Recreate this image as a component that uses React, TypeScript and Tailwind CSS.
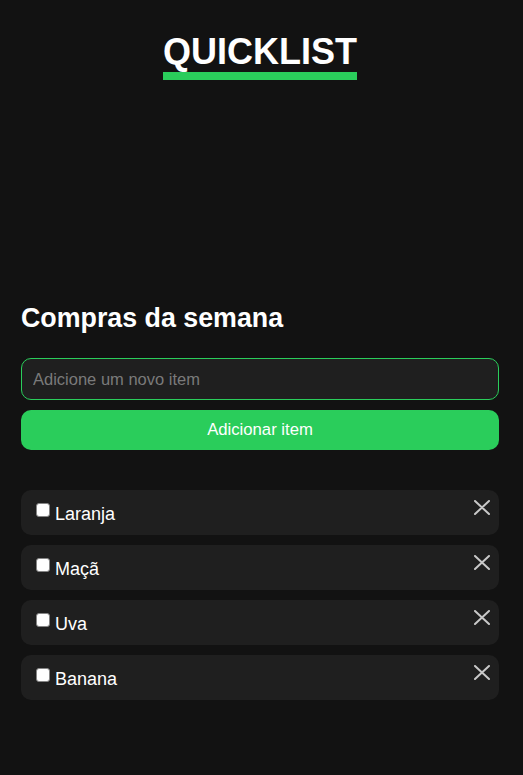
import { useState } from "react";

const initialItems = ["Laranja", "Maçã", "Uva", "Banana"];

function CloseIcon() {
  return (
    <svg width="16" height="15" viewBox="0 0 16 15" fill="none">
      <path d="M1 1 15 14M15 1 1 14" stroke="#c8c8c8" strokeWidth="2" strokeLinecap="round" />
    </svg>
  );
}

export default function App() {
  const [items, setItems] = useState(initialItems);
  const [value, setValue] = useState("");

  const addItem = () => {
    if (!value.trim()) return;
    setItems([...items, value.trim()]);
    setValue("");
  };

  return (
    <div className="min-h-[775px] bg-[#121212] text-white font-['Liberation_Sans',Arial,sans-serif] pl-[21px] pr-[24px]">
      {/* Header */}
      <header className="flex justify-center pt-[34px]">
        <h1 className="inline-block text-[36px] leading-[36px] font-bold pb-[2px] border-b-8 border-[#2acd5b]">
          QUICKLIST
        </h1>
      </header>

      {/* Main */}
      <main className="pt-[223px]">
        <h2 className="text-[26.8px] leading-[31px] font-bold">Compras da semana</h2>

        <div className="mt-[24px] flex flex-col gap-[10px]">
          <input
            autoFocus
            value={value}
            onChange={(e) => setValue(e.target.value)}
            placeholder="Adicione um novo item"
            className="h-[42px] w-full rounded-[10px] border border-[#2acd5b] bg-[#1f1f1f] px-[11px] text-[16.5px] text-white placeholder:text-[#7a7a7a] outline-none"
          />
          <button
            onClick={addItem}
            className="h-[40px] w-full rounded-[10px] bg-[#2acd5b] text-[16.7px] text-white"
          >
            Adicionar item
          </button>
        </div>

        <ul className="mt-[40px] flex flex-col gap-[10px]">
          {items.map((item, i) => (
            <li
              key={item + i}
              className="flex h-[45px] items-start justify-between rounded-[10px] bg-[#1f1f1f] pl-[15px] pr-[9px]"
            >
              <label className="pt-[13px] text-[18px] leading-[22px]">
                <input
                  type="checkbox"
                  className="mr-[5px] mb-[3px] h-[14px] w-[14px] appearance-none rounded-[3px] border border-[#858585] bg-white align-baseline"
                />
                {item}
              </label>
              <button
                onClick={() => setItems(items.filter((_, j) => j !== i))}
                className="mt-[10px]"
                aria-label="Remover"
              >
                <CloseIcon />
              </button>
            </li>
          ))}
        </ul>
      </main>
    </div>
  );
}
